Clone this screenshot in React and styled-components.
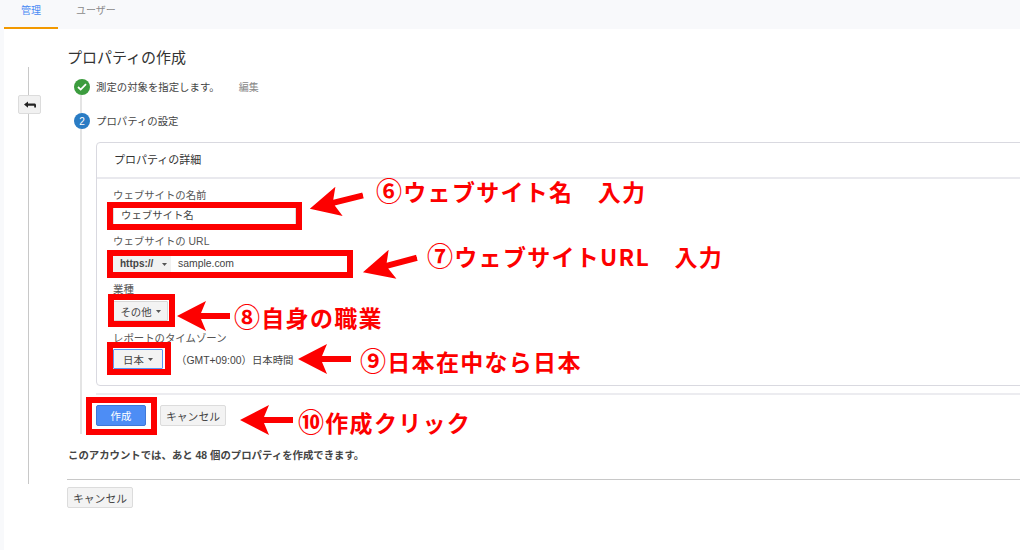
import styled, { createGlobalStyle } from "styled-components";

const GlobalStyle = createGlobalStyle`
  html, body {
    margin: 0;
    padding: 0;
    background: #f8f9fb;
  }
  body {
    font-family: "Liberation Sans", "Noto Sans CJK JP", sans-serif;
    color: #444;
    overflow: hidden;
  }
`;

const FRAMES = [
  { x: 107, y: 202, w: 195, h: 28 },
  { x: 107, y: 250, w: 246, h: 28 },
  { x: 108, y: 294, w: 67, h: 33 },
  { x: 107, y: 342, w: 64, h: 33 },
  { x: 86, y: 397, w: 71, h: 38 },
];

const ARROWS = [
  { x: 309, y: 187, w: 55, h: 30, tilt: -14 },
  { x: 362, y: 250, w: 56, h: 30, tilt: -15 },
  { x: 177, y: 301, w: 53, h: 30, tilt: 0 },
  { x: 298, y: 344, w: 53, h: 30, tilt: 0 },
  { x: 240, y: 405, w: 53, h: 30, tilt: 0 },
];

const NOTES = [
  { x: 376, y: 173, num: "⑥", text: "ウェブサイト名　入力" },
  { x: 427, y: 238, num: "⑦", text: "ウェブサイトURL　入力" },
  { x: 234, y: 299, num: "⑧", text: "自身の職業" },
  { x: 360, y: 343, num: "⑨", text: "日本在中なら日本" },
  { x: 298, y: 404, num: "⑩", text: "作成クリック" },
];

const Caret = () => <CaretMark viewBox="0 0 5 3"><path d="M0 0h5L2.5 3z" /></CaretMark>;

const App = () => {
  return (
    <Page>
      <GlobalStyle />
      <TopBar>
        <Tab $active>管理</Tab>
        <Tab>ユーザー</Tab>
      </TopBar>
      <Content>
        <Rail>
          <BackButton>
            <svg width="12" height="8" viewBox="0 0 12 8">
              <path d="M0 3.5 4 .5v2h6.5c.8 0 1.5.7 1.5 1.5v2.5h-1.8V4.8H4v2z" fill="#222" />
            </svg>
          </BackButton>
        </Rail>
        <Main>
          <Title>プロパティの作成</Title>
          <StepRow>
            <StepCircle $color="#3c9c3e">
              <svg width="10" height="8" viewBox="0 0 10 8">
                <path d="M1 4l2.7 2.6L9 1.2" fill="none" stroke="#fff" strokeWidth="1.8" />
              </svg>
            </StepCircle>
            <StepText>測定の対象を指定します。</StepText>
            <EditLink>編集</EditLink>
          </StepRow>
          <StepGap />
          <StepRow>
            <StepCircle $color="#2a7cc4">2</StepCircle>
            <StepText>プロパティの設定</StepText>
          </StepRow>
          <StepBody>
            <Card>
              <CardHeader>プロパティの詳細</CardHeader>
              <CardBody>
                <FieldLabel>ウェブサイトの名前</FieldLabel>
                <TextInput>ウェブサイト名</TextInput>
                <FieldLabel $top={12}>ウェブサイトの URL</FieldLabel>
                <UrlInput>
                  <Protocol>https:// <Caret /></Protocol>
                  <UrlText>sample.com</UrlText>
                </UrlInput>
                <FieldLabel $top={12}>業種</FieldLabel>
                <SelectButton $width={55}>その他 <Caret /></SelectButton>
                <FieldLabel $top={12}>レポートのタイムゾーン</FieldLabel>
                <ZoneRow>
                  <SelectButton $width={50} $focus>日本 <Caret /></SelectButton>
                  <ZoneText>（GMT+09:00）日本時間</ZoneText>
                </ZoneRow>
              </CardBody>
            </Card>
            <Divider />
            <Actions>
              <PrimaryButton>作成</PrimaryButton>
              <Button>キャンセル</Button>
            </Actions>
          </StepBody>
          <Remaining>このアカウントでは、あと 48 個のプロパティを作成できます。</Remaining>
          <FooterLine />
          <FooterButton>キャンセル</FooterButton>
        </Main>
      </Content>
      {FRAMES.map((f) => (
        <RedFrame key={f.x + "-" + f.y} $x={f.x} $y={f.y} $w={f.w} $h={f.h} />
      ))}
      {ARROWS.map((a) => (
        <RedArrow
          key={a.x + "-" + a.y}
          $x={a.x}
          $y={a.y}
          $tilt={a.tilt}
          width={a.w}
          height={a.h}
          viewBox="0 0 53 30"
          preserveAspectRatio="none"
        >
          <path d="M0 15 29 0 24 12H53V18H24L29 30z" fill="#fd0000" />
        </RedArrow>
      ))}
      {NOTES.map((n) => (
        <Note key={n.num} $x={n.x} $y={n.y}>
          <NoteNum>{n.num}</NoteNum>
          {n.text}
        </Note>
      ))}
    </Page>
  );
};
export default App;

const Page = styled.div`
  position: relative;
  width: 1020px;
  height: 550px;
  overflow: hidden;
  font-size: 10px;
`;
const TopBar = styled.div`
  display: flex;
  height: 29px;
  padding-left: 4px;
  box-sizing: border-box;
`;
const Tab = styled.div`
  width: ${(p) => (p.$active ? "54px" : "auto")};
  margin-left: ${(p) => (p.$active ? "0" : "18px")};
  box-sizing: border-box;
  height: 29px;
  line-height: 22px;
  text-align: center;
  font-size: 10px;
  color: ${(p) => (p.$active ? "#4a8af4" : "#8a8a8a")};
  border-bottom: ${(p) => (p.$active ? "2px solid #f29900" : "none")};
`;
const Content = styled.div`
  display: flex;
  margin-left: 4px;
  height: 521px;
  background: #fff;
`;
const Rail = styled.div`
  width: 39px;
  height: 417px;
  margin: 38px 0 0 24px;
  border-left: 1px solid #c8c8c8;
  flex: none;
`;
const BackButton = styled.div`
  display: flex;
  align-items: center;
  justify-content: center;
  width: 23px;
  height: 19px;
  box-sizing: border-box;
  margin: 28px 0 0 -11px;
  background: #f1f1f1;
  border: 1px solid #dcdcdc;
  border-radius: 2px;
`;
const Main = styled.div`
  flex: 1;
  min-width: 0;
`;
const Title = styled.div`
  margin: 18px 0 10px -1px;
  height: 22px;
  line-height: 22px;
  font-size: 15px;
  color: #333;
`;
const StepRow = styled.div`
  display: flex;
  align-items: center;
  height: 16px;
  margin: 0 0 0 6px;
`;
const StepCircle = styled.div`
  display: flex;
  align-items: center;
  justify-content: center;
  width: 16px;
  height: 16px;
  border-radius: 50%;
  background: ${(p) => p.$color};
  color: #fff;
  font-size: 10px;
  flex: none;
`;
const StepText = styled.div`
  margin: -2px 0 0 6px;
  font-size: 10.4px;
  color: #444;
`;
const EditLink = styled.div`
  margin: -2px 0 0 19px;
  font-size: 10px;
  color: #888;
`;
const StepGap = styled.div`
  height: 18px;
  width: 2px;
  margin-left: 12px;
  background: #e4e4e4;
`;
const StepBody = styled.div`
  margin-left: 12px;
  padding: 13px 0 8px 14px;
  border-left: 2px solid #e4e4e4;
  height: 284px;
`;
const Card = styled.div`
  width: 940px;
  height: 244px;
  box-sizing: border-box;
  border: 1px solid #d9d9e0;
  border-radius: 4px;
  background: #fff;
`;
const CardHeader = styled.div`
  height: 36px;
  box-sizing: border-box;
  padding-left: 17px;
  line-height: 34px;
  font-size: 11px;
  color: #333;
  border-bottom: 2px solid #e9e9ee;
`;
const CardBody = styled.div`
  padding: 11px 0 0 16px;
`;
const FieldLabel = styled.div`
  margin-top: ${(p) => p.$top || 0}px;
  height: 12px;
  line-height: 12px;
  font-size: 10.4px;
  color: #555;
`;
const TextInput = styled.div`
  width: 183px;
  height: 16px;
  box-sizing: border-box;
  margin-top: 6px;
  padding-left: 7px;
  line-height: 16px;
  font-size: 10.4px;
  color: #444;
  border-left: 1px solid #ddd;
  border-right: 1px solid #ddd;
`;
const UrlInput = styled.div`
  display: flex;
  width: 234px;
  height: 16px;
  margin-top: 8px;
  line-height: 16px;
`;
const Protocol = styled.div`
  display: flex;
  align-items: center;
  gap: 5px;
  width: 58px;
  box-sizing: border-box;
  padding-left: 7px;
  background: #f1f1f1;
  font-weight: 700;
  font-size: 10px;
  color: #444;
`;
const UrlText = styled.div`
  padding-left: 7px;
  font-size: 10.4px;
  color: #444;
`;
const CaretMark = styled.svg`
  width: 5px;
  height: 3px;
  fill: #555;
  margin-left: 4px;
  flex: none;
`;
const SelectButton = styled.div`
  display: flex;
  align-items: center;
  justify-content: center;
  width: ${(p) => p.$width}px;
  height: 20px;
  box-sizing: border-box;
  margin-top: ${(p) => (p.$focus ? "0" : "5px")};
  font-size: 10.4px;
  color: #444;
  background: #f3f3f3;
  border: 1px solid ${(p) => (p.$focus ? "#5a95f5" : "#d8d8d8")};
  border-radius: 1px;
`;
const ZoneRow = styled.div`
  display: flex;
  align-items: center;
  margin-top: 4px;
`;
const ZoneText = styled.div`
  margin-left: 13px;
  font-size: 10.4px;
  color: #444;
`;
const Divider = styled.div`
  height: 2px;
  margin-top: 7px;
  background: #ececf0;
`;
const Actions = styled.div`
  display: flex;
  gap: 14px;
  margin-top: 10px;
`;
const Button = styled.div`
  display: flex;
  align-items: center;
  justify-content: center;
  width: 66px;
  height: 21px;
  box-sizing: border-box;
  font-size: 10.8px;
  color: #444;
  background: #f3f3f3;
  border: 1px solid #dcdcdc;
  border-radius: 2px;
`;
const PrimaryButton = styled(Button)`
  width: 50px;
  font-size: 10.4px;
  color: #fff;
  background: #4d8df5;
  border-color: #3f78d8;
`;
const FooterButton = styled(Button)`
  margin-left: -1px;
`;
const Remaining = styled.div`
  margin-top: 15px;
  height: 14px;
  line-height: 14px;
  font-size: 10.4px;
  font-weight: 700;
  color: #444;
`;
const FooterLine = styled.div`
  height: 1px;
  margin: 16px 0 7px -1px;
  background: #c8c8c8;
`;
const RedFrame = styled.div`
  position: absolute;
  left: ${(p) => p.$x}px;
  top: ${(p) => p.$y}px;
  width: ${(p) => p.$w}px;
  height: ${(p) => p.$h}px;
  box-sizing: border-box;
  border: 6px solid #fd0000;
`;
const RedArrow = styled.svg`
  position: absolute;
  left: ${(p) => p.$x}px;
  top: ${(p) => p.$y}px;
  transform: rotate(${(p) => p.$tilt}deg);
`;
const Note = styled.div`
  position: absolute;
  left: ${(p) => p.$x}px;
  top: ${(p) => p.$y}px;
  font-family: "Noto Sans CJK JP", sans-serif;
  font-size: 23px;
  line-height: 34px;
  font-weight: 700;
  letter-spacing: 1.3px;
  color: #fd0000;
  white-space: nowrap;
`;
const NoteNum = styled.span`
  font-size: 26px;
`;
